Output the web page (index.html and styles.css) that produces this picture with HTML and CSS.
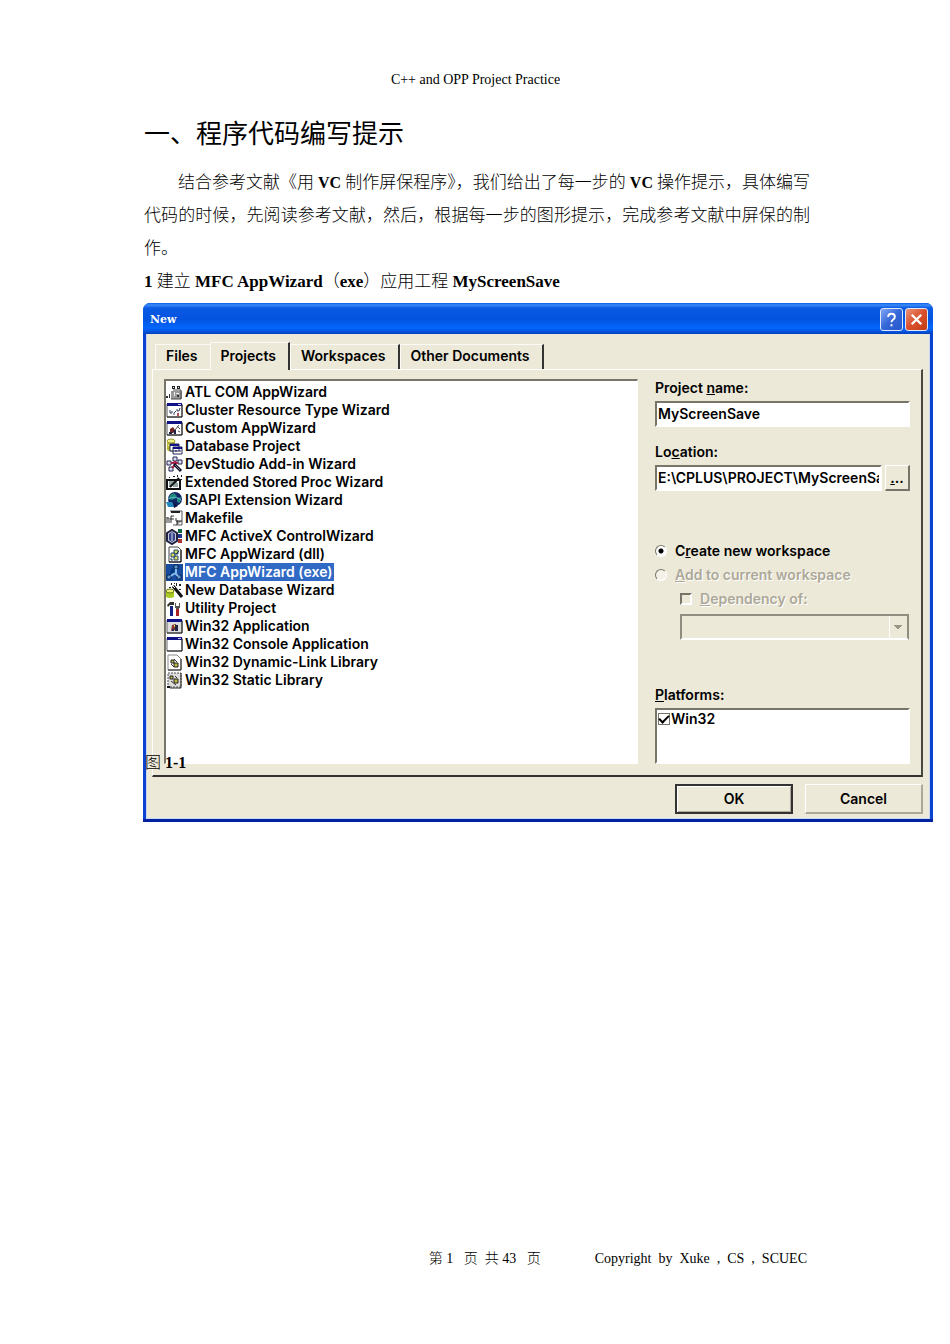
FILE: index.html
```html
<!DOCTYPE html>
<html lang="zh-CN">
<head>
    <meta charset="UTF-8">
    <meta name="viewport" content="width=device-width, initial-scale=1.0">
    <title>C++ and OPP Project Practice</title>
    <link rel="stylesheet" href="styles.css">
</head>
<body>
    <header class="page-header">C++ and OPP Project Practice</header>

    <main>
        <h1>一、程序代码编写提示</h1>
        <p class="intro">结合参考文献《用<b> VC </b>制作屏保程序》，我们给出了每一步的<b> VC </b>操作提示，具体编写代码的时候，先阅读参考文献，然后，根据每一步的图形提示，完成参考文献中屏保的制作。</p>
        <h2>1 <span>建立</span> MFC AppWizard<span>（</span>exe<span>）应用工程</span> MyScreenSave</h2>

        <figure>
            <form class="dialog">
                <div class="titlebar">
                    <span class="title">New</span>
                    <button type="button" class="help" aria-label="Help">
                        <svg width="22" height="22" viewBox="0 0 22 22"><path d="M7.5 8.5Q7.5 5 11 5T14.500 8.300Q14.500 10 12.500 11.200Q11 12.200 11 14M11 16v2" fill="none" stroke="#fff" stroke-width="2"/></svg>
                    </button>
                    <button type="button" class="close" aria-label="Close">
                        <svg width="22" height="22" viewBox="0 0 22 22"><path d="M6 6l10 10M16 6L6 16" stroke="#fff" stroke-width="2.400"/></svg>
                    </button>
                </div>

                <div class="client">
                    <div class="tabs" role="tablist">
                        <button type="button" role="tab">Files</button>
                        <button type="button" role="tab" class="active" aria-selected="true">Projects</button>
                        <button type="button" role="tab">Workspaces</button>
                        <button type="button" role="tab">Other Documents</button>
                    </div>

                    <div class="panel">
                        <ul class="projects" role="listbox" aria-label="Project types">
                            <li role="option">
                                <svg viewBox="0 0 17 17"><path d="M5 7h11v8H5z" fill="#999"/><path d="M15 6v9H5M7 6h8" fill="none" stroke="#444"/><path d="M6 2h3v3H6zM11 2h3v3h-3z" fill="#222"/><path d="M7 3h1v1H7zM12 3h1v1h-1zM8 8h1v4H8zM10 9h3v1h-3z" fill="#eee"/><path d="M0 12h2v2H0zM3 10h1v4H3zM11 11h2v2h-2z" fill="#333"/></svg>
                                <span>ATL COM AppWizard</span></li>
                            <li role="option">
                                <svg viewBox="0 0 17 17"><path d="M1 2h15v13H1z" fill="#fff" stroke="#555"/><path d="M1 1h15v3H1z" fill="#118"/><path d="M16 3v12H1" fill="none" stroke="#222"/><path d="M4 8v3h2V9m2 4v-2l2-2m1-2v2h2l1-3" fill="none" stroke="#346"/><path d="M11 11h2v3h-2z" fill="#a55"/><path d="M12 2h3v1h-3z" fill="#ccd"/></svg>
                                <span>Cluster Resource Type Wizard</span></li>
                            <li role="option">
                                <svg viewBox="0 0 17 17"><path d="M1 2h15v13H1z" fill="#fff" stroke="#555"/><path d="M1 1h15v3H1z" fill="#118"/><path d="M16 3v12H1" fill="none" stroke="#222"/><path d="M4 9l3-2 2 3-2 3H4z" fill="#722"/><path d="M3 12h3v2H3zM7 10h3v4H8z" fill="#224"/><path d="M9 10l4-5M11 6l3 3M12 11l2 1" stroke="#555"/></svg>
                                <span>Custom AppWizard</span></li>
                            <li role="option">
                                <svg viewBox="0 0 17 17"><path d="M1 3v9q4 3 8 0V3" fill="#bb3"/><ellipse cx="5" cy="3" rx="4" ry="2" fill="#ee8" stroke="#993"/><path d="M2 7q3 2 6 0" fill="none" stroke="#ff9"/><path d="M4 6h9v7H4zM7 9h9v7H7z" fill="#fff" stroke="#225"/><path d="M4 6h9v2H4zM7 9h9v2H7z" fill="#118"/><path d="M9 13h2m2 0h2" stroke="#225"/></svg>
                                <span>Database Project</span></li>
                            <li role="option">
                                <svg viewBox="0 0 17 17"><path d="M7 1h4v4H7zM1 5h4v4H1zM12 4h4v4h-4zM3 11h4v4H3z" fill="#dde" stroke="#225"/><path d="M9 5v4M5 7h7M6 12l3-3" stroke="#a24" stroke-width="2"/><path d="M8 8l7 7" stroke="#112" stroke-width="3"/><path d="M9 9l5 5" stroke="#77a"/></svg>
                                <span>DevStudio Add-in Wizard</span></li>
                            <li role="option">
                                <svg viewBox="0 0 17 17"><path d="M1 6h13v9H1z" fill="#fff" stroke="#111" stroke-width="2"/><path d="M3 8h8M3 10h3m2 0h4M3 12h2m2 0h5" stroke="#244"/><path d="M4 13L13 4" stroke="#111" stroke-width="2"/><path d="M11 1h1v2h-1zM15 1h1v2h-1zM14 5h2v1h-2zM7 2h2v1H7zM3 3h1v1H3z" fill="#222"/></svg>
                                <span>Extended Stored Proc Wizard</span></li>
                            <li role="option">
                                <svg viewBox="0 0 17 17"><circle cx="9" cy="7" r="7" fill="#126"/><path d="M4 3l4-2 3 3-2 3-4 1-2-2zM11 6l4-1-1 6-3-1z" fill="#287"/><path d="M2 7q7-4 13 1" fill="none" stroke="#5bd"/><path d="M0 10h6l4 5H2z" fill="#28b"/><path d="M7 10l5 4-4 2z" fill="#114"/></svg>
                                <span>ISAPI Extension Wizard</span></li>
                            <li role="option">
                                <svg viewBox="0 0 17 17"><path d="M4 1h12v14H7" fill="#fff" stroke="#555"/><path d="M5 2h9" stroke="#222" stroke-width="2"/><path d="M1 7v6m0-5h2v5m2 0V6h3M4 9h4m2-1v3h2" fill="none" stroke="#333"/><path d="M11 15v-4h5" fill="#999" stroke="#222"/></svg>
                                <span>Makefile</span></li>
                            <li role="option">
                                <svg viewBox="0 0 17 17"><path d="M1 5l5-3 5 3v8l-5 3-5-3z" fill="#ccd" stroke="#224" stroke-width="2"/><path d="M3 6l3-2 3 2v6l-3 2-3-2z" fill="#348"/><path d="M6 5v8" stroke="#dde"/><path d="M12 1h4v4h-4z" fill="#164"/><path d="M12 6h4v4h-4z" fill="#238"/><path d="M12 11h4v4h-4z" fill="#a33"/></svg>
                                <span>MFC ActiveX ControlWizard</span></li>
                            <li role="option">
                                <svg viewBox="0 0 17 17"><path d="M3 1h9l3 3v12H3z" fill="#fff" stroke="#444"/><path d="M15 4v12H3" fill="none" stroke="#111"/><path d="M8 4h4v4H8zM5 7h4v4H5zM8 10h4v4H8z" fill="#dd5" stroke="#247"/><path d="M5 12v2h2M10 8l3-3" fill="none" stroke="#134"/></svg>
                                <span>MFC AppWizard (dll)</span></li>
                            <li role="option" class="selected" aria-selected="true">
                                <svg viewBox="0 0 17 17"><path d="M0 0h17v17H0z" fill="#164b9e"/><path d="M8 1h4v4H8zM1 11h4v4H1zM11 11h4v4h-4z" fill="#69c" stroke="#025"/><path d="M10 5v4M5 12l4-3M12 12L9 9" stroke="#8be" stroke-width="2"/><path d="M6 4l3 4-5 2z" fill="#037"/></svg>
                                <span>MFC AppWizard (exe)</span></li>
                            <li role="option">
                                <svg viewBox="0 0 17 17"><path d="M0 9v6q4 2 8 0V9z" fill="#ac2"/><ellipse cx="4" cy="9" rx="4" ry="2" fill="#ee7" stroke="#671"/><path d="M7 4l9 11" stroke="#111" stroke-width="3"/><path d="M7 4l2 2" stroke="#fff"/><path d="M5 1h1v2H5zM10 1h1v3h-1zM13 2h2v2h-2zM3 5h2v1H3zM13 7h2v1h-2zM8 1h1v1H8z" fill="#222"/></svg>
                                <span>New Database Wizard</span></li>
                            <li role="option">
                                <svg viewBox="0 0 17 17"><path d="M1 5l3-3h4v3H4L2 7z" fill="#333"/><path d="M4 6h3v10H4z" fill="#128"/><path d="M9 3h1v3h3V3h1v5h-1v2h-3V8H9z" fill="#555"/><path d="M10 9h3v7h-3z" fill="#a22"/></svg>
                                <span>Utility Project</span></li>
                            <li role="option">
                                <svg viewBox="0 0 17 17"><path d="M1 2h15v13H1z" fill="#ddd" stroke="#666"/><path d="M1 1h15v3H1z" fill="#118"/><path d="M16 3v12H1" fill="none" stroke="#222"/><path d="M6 7l4-1 1 6H8l-3 1z" fill="#833"/><path d="M9 7h3v6H9zM6 11h2v2H6z" fill="#224"/><path d="M8 7h1v2H8z" fill="#dd5"/></svg>
                                <span>Win32 Application</span></li>
                            <li role="option">
                                <svg viewBox="0 0 17 17"><path d="M1 2h15v13H1z" fill="#fff" stroke="#666"/><path d="M1 1h15v3H1z" fill="#118"/><path d="M16 3v12H1" fill="none" stroke="#222"/><path d="M12 2h3v1h-3z" fill="#ccd"/></svg>
                                <span>Win32 Console Application</span></li>
                            <li role="option">
                                <svg viewBox="0 0 17 17"><path d="M2 1h9l4 4v11H2z" fill="#fff" stroke="#888"/><path d="M15 5v11H2" fill="none" stroke="#222"/><path d="M5 6h3v3H5zM8 9h4v4H8z" fill="#bb4" stroke="#222"/><path d="M5 10l3 3M8 5l3 3" stroke="#333"/></svg>
                                <span>Win32 Dynamic-Link Library</span></li>
                            <li role="option">
                                <svg viewBox="0 0 17 17"><path d="M2 1h13v14H2z" fill="#ddd" stroke="#555" stroke-dasharray="2 1"/><path d="M15 1v15H4" fill="none" stroke="#222"/><path d="M4 4h3v3H4zM8 7h4v4H8z" fill="#bb4" stroke="#222"/><path d="M5 9l5 4M9 4l2 2" stroke="#333"/><path d="M1 14h3v2H1z" fill="#111"/></svg>
                                <span>Win32 Static Library</span></li>
                        </ul>

                        <div class="settings">
                            <label for="name">Project <u>n</u>ame:</label>
                            <input type="text" id="name" value="MyScreenSave">

                            <label for="location" class="spaced">Lo<u>c</u>ation:</label>
                            <div class="location">
                                <input type="text" id="location" value="E:\CPLUS\PROJECT\MyScreenSave">
                                <button type="button" class="browse" aria-label="Browse"><u>.</u>..</button>
                            </div>

                            <div class="workspace">
                                <label><input type="radio" name="workspace" checked> <span>C<u>r</u>eate new workspace</span></label>
                                <label class="disabled"><input type="radio" name="workspace" disabled> <span><u>A</u>dd to current workspace</span></label>
                                <label class="disabled dependency"><input type="checkbox" disabled> <span><u>D</u>ependency of:</span></label>
                                <select disabled aria-label="Dependency of"></select>
                            </div>

                            <span class="label"><u>P</u>latforms:</span>
                            <div class="platforms">
                                <label><input type="checkbox" checked> <span>Win32</span></label>
                            </div>
                        </div>
                    </div>

                    <div class="actions">
                        <button type="submit" class="default">OK</button>
                        <button type="button">Cancel</button>
                    </div>
                </div>
            </form>
            <figcaption><span>图</span> 1-1</figcaption>
        </figure>
    </main>

    <footer>
        <span>第 1   页  共 43   页</span>
        <span>Copyright  by  Xuke  ,  CS  ,  SCUEC</span>
    </footer>
</body>
</html>
```

FILE: styles.css
```css
* { box-sizing: border-box; }
body { margin: 0; min-height: 100vh; padding: 71px 143px 75px 144px; display: flex; flex-direction: column; background: #fff; color: #000; font-family: "Liberation Serif", "Noto Sans CJK SC", serif; font-size: 17px; overflow-x: hidden; }
.page-header { text-align: center; font-size: 14px; line-height: 18px; }
h1 { margin: 26px 0 17px; font-family: "Noto Sans CJK SC", sans-serif; font-size: 26px; font-weight: 400; line-height: 34px; }
.intro { margin: 0 -3px 0 0; text-indent: 34px; text-align: justify; line-height: 33px; font-weight: 300; }
.intro b { font-size: 16px; font-weight: bold; }
h2 { margin: 0; font-size: 17px; line-height: 33px; white-space: nowrap; }
h2 span, figcaption span { font-weight: 300; }

figure { position: relative; margin: 5px -126px 0 -1px; }
figcaption { position: absolute; left: 2px; bottom: 49px; line-height: 20px; font-size: 16px; font-weight: bold; }

/* dialog window */
.dialog { font-family: Inter, "Liberation Sans", sans-serif; font-size: 14px; font-weight: 600; line-height: 18px; border-radius: 7px 7px 0 0; background: #0a43cf; overflow: hidden; }
.dialog button, .dialog input { font: inherit; color: #000; }
.titlebar { display: flex; align-items: center; gap: 2px; height: 31px; padding: 2px 5px 0 7px; background: linear-gradient(#0a5be8 0, #3c8cf8 2px, #0a5ae4 5px, #0453e0 16px, #0366fb 25px, #0450d8 29px, #0340b8 31px); }
.title { flex: 1; color: #fff; font-family: "DejaVu Serif", serif; font-size: 11px; font-weight: bold; }
.titlebar button { width: 23px; height: 23px; padding: 0; border: 1px solid #dfe9fb; border-radius: 3px; background: linear-gradient(135deg, #7fa5f2, #3466d8 50%, #2759cb); }
.titlebar .close { background: linear-gradient(135deg, #ec9378, #d9502c 50%, #c23c18); }
.titlebar svg { display: block; width: 21px; height: 21px; }
.client { margin: 0 3px; padding: 8px 6px 4px 5px; border: solid #c9d8f2; border-width: 0 1px 1px; background: #ece9d8; }
.dialog::after { content: ""; display: block; height: 3px; background: #0122a0; }

.tabs { display: flex; align-items: flex-end; padding-left: 3px; }
.tabs button { height: 25px; padding: 0 12px 2px 10px; border: solid #fbfaf5; border-width: 1px 0 0 1px; border-right: 2px solid #333; background: none; }
.tabs button:first-child { border-right: 0; }
.tabs .active { height: 28px; margin-bottom: -1px; background: #ece9d8; }

.panel { display: flex; gap: 17px; padding: 9px 11px 11px; border: 1px solid #fff; border-right: 2px solid #4a493f; border-bottom: 2px solid #333; }
.projects { flex: 1; margin: 0; padding: 2px 0 0; list-style: none; background: #fff; border: 1px solid #fff; border-top: 2px solid #77756a; border-left: 2px solid #77756a; }
.projects li { display: flex; height: 18px; align-items: center; }
.projects svg { width: 17px; height: 17px; margin-right: 2px; }
.projects .selected { color: #fff; }
.projects .selected span { padding-right: 2px; background: #316ac5; }

.settings { width: 255px; display: flex; flex-direction: column; }
.settings label, .label { display: block; }
.settings input[type="text"] { height: 26px; width: 100%; min-width: 0; margin-top: 4px; padding: 0 1px 2px; border: 2px solid #77756a; border-right-color: #fff; border-bottom-color: #fff; border-radius: 0; background: #fff; }
.settings .spaced { margin-top: 16px; }
.location { display: flex; gap: 3px; align-items: flex-end; }
.location input { flex: 1; }
.browse { width: 25px; height: 26px; padding: 0; border: 1px solid #fff; border-right: 2px solid #77756a; border-bottom: 2px solid #77756a; background: #ece9d8; }

.workspace { display: flex; flex-direction: column; gap: 6px; margin: 51px 0 46px; }
.workspace label { display: flex; align-items: center; gap: 8px; }
.workspace .disabled { color: #aca899; text-shadow: 1px 1px #fff; }
.workspace .dependency { margin-left: 25px; }
input[type="radio"], input[type="checkbox"] { appearance: none; width: 12px; height: 12px; margin: 0; border: 1px solid #77756a; }
input[type="radio"] { border-radius: 50%; border-color: #77756a #fff #fff #77756a; background: #f4f2e8; }
input[type="radio"]:checked { background: radial-gradient(#000 2px, #fff 3px); }
.dependency input { border-width: 2px; border-right-color: #fff; border-bottom-color: #fff; }
.workspace select { appearance: none; width: 229px; height: 26px; margin-left: 25px; border: 2px solid #8f8d7f; border-bottom-color: #fff; border-radius: 0; opacity: 1; background: conic-gradient(from -45deg at 50% 100%, #999786 90deg, transparent 0) right 5px center / 8px 4px no-repeat, linear-gradient(90deg, #fff 1px, #ece9d8 1px) right / 18px no-repeat, #ece9d8; }
.platforms { height: 56px; margin-top: 4px; padding: 0 1px; border: 2px solid #77756a; border-right-color: #fff; border-bottom-color: #fff; background: #fff; }
.platforms label { display: flex; align-items: center; gap: 1px; }
.platforms input { display: grid; place-items: center; background: #fff; }
.platforms input:checked::before { content: ""; width: 8px; height: 4px; margin-bottom: 3px; border: solid #000; border-width: 0 0 2px 2px; rotate: -45deg; }

.actions { display: flex; justify-content: flex-end; gap: 12px; padding-top: 7px; }
.actions button { width: 118px; height: 30px; border: 1px solid #fff; border-right: 2px solid #aca899; border-bottom: 2px solid #aca899; background: #ece9d8; }
.actions .default { border: 2px solid #333; box-shadow: inset 1px 1px #fff, inset -1px -1px #aca899; }

footer { display: flex; justify-content: flex-end; gap: 54px; margin-top: auto; font-size: 14px; line-height: 20px; font-weight: 300; white-space: pre; }
```
